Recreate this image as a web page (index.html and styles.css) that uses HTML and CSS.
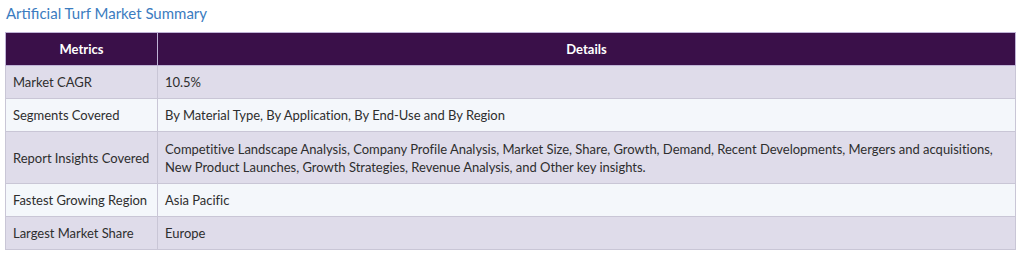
FILE: index.html
```html
<!DOCTYPE html>
<html lang="en">
<head>
<meta charset="utf-8">
<title>Artificial Turf Market Summary</title>
<link rel="stylesheet" href="styles.css">
</head>
<body>
<div class="wrap">
  <h2 class="title">Artificial Turf Market Summary</h2>
  <table class="summary">
    <thead>
      <tr><th class="c1">Metrics</th><th>Details</th></tr>
    </thead>
    <tbody>
      <tr class="alt"><td class="c1">Market CAGR</td><td>10.5%</td></tr>
      <tr><td class="c1">Segments Covered</td><td>By Material Type, By Application, By End-Use and By Region</td></tr>
      <tr class="alt tall"><td class="c1">Report Insights Covered</td><td>Competitive Landscape Analysis, Company Profile Analysis, Market Size, Share, Growth, Demand, Recent Developments, Mergers and acquisitions, New Product Launches, Growth Strategies, Revenue Analysis, and Other key insights.</td></tr>
      <tr><td class="c1">Fastest Growing Region</td><td>Asia Pacific</td></tr>
      <tr class="alt"><td class="c1">Largest Market Share</td><td>Europe</td></tr>
    </tbody>
  </table>
</div>
</body>
</html>
```
FILE: styles.css
```css
html, body {
  margin: 0;
  padding: 0;
  background: #ffffff;
}
.wrap {
  padding: 5px 8px 0 5px;
  font-family: Lato, "Open Sans", sans-serif;
}
.title {
  margin: 0 0 10px 1px;
  font-size: 15px;
  font-weight: 400;
  line-height: 17px;
  color: #3b7cc0;
}
.summary {
  width: 1011px;
  border-collapse: collapse;
  font-size: 13px;
  color: #2e2e2e;
}
.summary th {
  background: #3a1049;
  color: #ffffff;
  font-weight: 700;
  height: 32px;
  padding: 0 8px;
  text-align: center;
  border: 1px solid #bfb3d6;
}
.summary th.c1 {
  width: 135px;
}
.summary td {
  height: 32px;
  padding: 0 7px;
  border: 1px solid #c9c6d6;
  background: #f4f7fb;
  line-height: 18px;
  vertical-align: middle;
  letter-spacing: -0.02px;
}
.summary tr.alt td {
  background: #dfdcea;
}
.summary tr.tall td {
  height: 51px;
}
.summary tr.short td {
  height: 31px;
}
```
